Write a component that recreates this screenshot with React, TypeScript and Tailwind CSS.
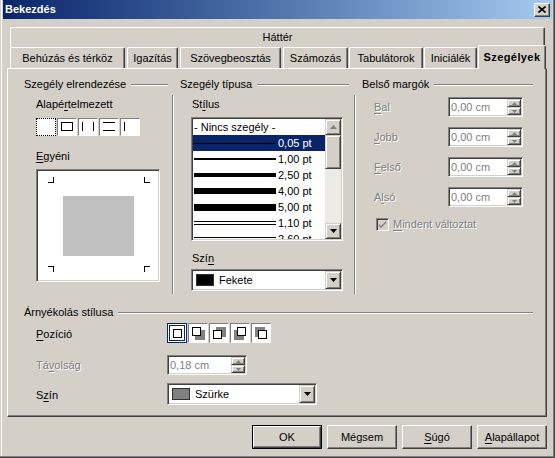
import React from 'react';

const raised =
  'border border-t-white border-l-white border-b-[#404040] border-r-[#404040] shadow-[inset_-1px_-1px_#808080]';
const sunken =
  'border border-t-[#808080] border-l-[#808080] border-b-white border-r-white shadow-[inset_1px_1px_#404040,inset_-1px_-1px_#d4d0c8]';
const scrollBtn =
  'bg-[#d4d0c8] border border-t-[#d4d0c8] border-l-[#d4d0c8] border-b-[#404040] border-r-[#404040] shadow-[inset_1px_1px_#ffffff,inset_-1px_-1px_#808080]';
const disabledText = 'text-[#808080] [text-shadow:1px_1px_0_#ffffff]';

function Arrow({ dir, color = '#000', w = 7, h = 4 }: { dir: 'up' | 'down'; color?: string; w?: number; h?: number }) {
  const pts = dir === 'down' ? `0,0 ${w},0 ${w / 2},${h}` : `0,${h} ${w},${h} ${w / 2},0`;
  return (
    <svg width={w} height={h} className="block">
      <polygon points={pts} fill={color} />
    </svg>
  );
}

function GroupHeader({ title, className = '' }: { title: string; className?: string }) {
  return (
    <div className={`flex h-[13px] ${className}`}>
      <span className="whitespace-nowrap">{title}</span>
      <div className="flex-1 ml-[5px] mt-[6px] h-[2px] border-t border-t-[#808080] border-b border-b-white" />
    </div>
  );
}

function VSep({ className = '' }: { className?: string }) {
  return <div className={`w-[2px] h-[199px] mt-[17px] border-l border-l-[#808080] border-r border-r-white ${className}`} />;
}

function Mn({ children }: { children: React.ReactNode }) {
  return <span className="underline underline-offset-[2px]">{children}</span>;
}

function Tab({ label, w, ml, selected }: { label: string; w: number; ml: number; selected?: boolean }) {
  const base =
    'flex items-center justify-center border-t border-l border-white border-r border-r-[#404040] shadow-[inset_-1px_0_#808080] rounded-tl-[2px] rounded-tr-[2px] whitespace-nowrap';
  return (
    <div
      className={`${base} ${selected ? 'h-[24px] -mb-[1px] relative z-10 bg-[#d4d0c8] font-bold tracking-[0.4px]' : 'h-[21px]'}`}
      style={{ width: w, marginLeft: ml }}
    >
      {label}
    </div>
  );
}

function PresetIcon({ kind }: { kind: number }) {
  if (kind === 0) {
    return <div className="w-[20px] h-[18px] bg-white border border-dotted border-black" />;
  }
  return (
    <div className="w-[20px] h-[18px] bg-white border border-t-[#808080] border-l-[#808080] border-b-white border-r-white">
      <svg width="18" height="16" className="block" shapeRendering="crispEdges">
        {kind === 1 && <rect x="3.5" y="3.5" width="11" height="8" fill="none" stroke="#000" />}
        {kind === 2 && (
          <>
            <line x1="3.5" y1="3" x2="3.5" y2="12" stroke="#000" />
            <line x1="14.5" y1="3" x2="14.5" y2="12" stroke="#000" />
          </>
        )}
        {kind === 3 && (
          <>
            <line x1="3" y1="3.5" x2="15" y2="3.5" stroke="#000" />
            <line x1="3" y1="11.5" x2="15" y2="11.5" stroke="#000" />
          </>
        )}
        {kind === 4 && <line x1="3.5" y1="3" x2="3.5" y2="12" stroke="#000" />}
      </svg>
    </div>
  );
}

function ShadowIcon({ kind }: { kind: number }) {
  const sq: Record<number, [number, number]> = { 0: [5, 5], 1: [3, 3], 2: [3, 6], 3: [6, 3], 4: [6, 6] };
  const sh: Record<number, [number, number]> = { 1: [6, 6], 2: [6, 3], 3: [3, 6], 4: [3, 3] };
  const [sx, sy] = sq[kind];
  const frame =
    kind === 0
      ? 'border border-[#0a246a] shadow-[inset_0_0_0_1px_#ffffff,inset_0_0_0_2px_#0a246a]'
      : 'border border-t-[#808080] border-l-[#808080] border-b-white border-r-white';
  return (
    <div className={`w-[20px] h-[20px] bg-white ${frame}`}>
      <svg width="18" height="18" className="block" shapeRendering="crispEdges">
        {kind !== 0 && <rect x={sh[kind][0]} y={sh[kind][1]} width="10" height="10" fill="#808080" />}
        <rect x={sx + 0.5} y={sy + 0.5} width="8" height="8" fill="#fff" stroke="#000" />
      </svg>
    </div>
  );
}

function Dropdown({ w, swatch, label }: { w: number; swatch: string; label: string }) {
  return (
    <div className={`${sunken} h-[22px] bg-white p-[1px] flex items-center`} style={{ width: w }}>
      <div className="ml-[3px] w-[18px] h-[12px] border border-[#303030]" style={{ background: swatch }} />
      <span className="ml-[5px] flex-1">{label}</span>
      <div className={`${scrollBtn} w-[16px] h-[18px] flex items-center justify-center`}>
        <Arrow dir="down" />
      </div>
    </div>
  );
}

function SpinField({ value, w }: { value: string; w: number }) {
  return (
    <div className={`${sunken} h-[20px] bg-white p-[1px] flex`} style={{ width: w }}>
      <span className="flex-1 pl-[1px] leading-[16px] text-[#808080]">{value}</span>
      <div className="w-[14px] flex flex-col">
        <div className={`${scrollBtn} h-[8px] flex items-center justify-center`}>
          <Arrow dir="up" w={5} h={3} color="#808080" />
        </div>
        <div className={`${scrollBtn} h-[8px] flex items-center justify-center`}>
          <Arrow dir="down" w={5} h={3} color="#808080" />
        </div>
      </div>
    </div>
  );
}

type LineStyle = { label: string; lines: [number, number][] };

const styles: LineStyle[] = [
  { label: '0,05 pt', lines: [[1, 0]] },
  { label: '1,00 pt', lines: [[2, 0]] },
  { label: '2,50 pt', lines: [[4, 0]] },
  { label: '4,00 pt', lines: [[6, 0]] },
  { label: '5,00 pt', lines: [[7, 0]] },
  { label: '1,10 pt', lines: [[1, 0], [1, 2]] },
  { label: '2,60 pt', lines: [[1, 0], [2, 2]] },
];

function StyleList() {
  return (
    <div className={`${sunken} w-[152px] h-[124px] bg-white p-[1px] flex`}>
      <div className="flex-1 flex flex-col overflow-hidden">
        <div className="h-[16px] shrink-0 flex items-center pl-[1px] whitespace-nowrap">- Nincs szegély -</div>
        {styles.map((s, i) => (
          <div
            key={s.label}
            className={`h-[16px] shrink-0 flex items-center ${i === 0 ? 'bg-[#0a246a] text-white' : ''}`}
          >
            <div className="ml-[1px] w-[82px] flex flex-col">
              {s.lines.map(([h, mt], j) => (
                <div key={j} className="bg-black w-full" style={{ height: h, marginTop: mt }} />
              ))}
            </div>
            <span className="ml-[2px] whitespace-nowrap">{s.label}</span>
          </div>
        ))}
      </div>
      <div className="w-[16px] flex flex-col bg-[#ecebe8]">
        <div className={`${scrollBtn} h-[16px] flex items-center justify-center`}>
          <Arrow dir="up" color="#808080" />
        </div>
        <div className={`${scrollBtn} h-[34px]`} />
        <div className="flex-1" />
        <div className={`${scrollBtn} h-[16px] flex items-center justify-center`}>
          <Arrow dir="down" />
        </div>
      </div>
    </div>
  );
}

function Preview() {
  return (
    <div className={`${sunken} w-[124px] h-[113px] bg-white p-[1px] mt-[6px]`}>
      <svg width="120" height="109" className="block" shapeRendering="crispEdges">
        <rect x="25" y="25" width="71" height="60" fill="#c0c0c0" />
        <g stroke="#000" fill="none">
          <path d="M10 11.5h5.5V6" />
          <path d="M106 6v5.5h5.5" />
          <path d="M10 95.5h5.5V101" />
          <path d="M106 101v-5.5h5.5" />
        </g>
      </svg>
    </div>
  );
}

function MarginRow({ label, first }: { label: React.ReactNode; first?: boolean }) {
  return (
    <div className={`flex items-center h-[20px] pl-[12px] ${first ? 'mt-[6px]' : 'mt-[10px]'}`}>
      <span className={`w-[74px] ${disabledText}`}>{label}</span>
      <SpinField value="0,00 cm" w={75} />
    </div>
  );
}

function Button({ children, isDefault }: { children: React.ReactNode; isDefault?: boolean }) {
  const inner = (
    <div className={`${raised} w-full h-full flex items-center justify-center bg-[#d4d0c8]`}>{children}</div>
  );
  return (
    <div className={`w-[70px] h-[24px] ${isDefault ? 'border border-black' : ''}`}>{inner}</div>
  );
}

export default function App() {
  return (
    <div className="w-[555px] h-[458px] bg-[#d4d0c8] flex flex-col text-[11px] leading-[13px] text-black [font-family:Liberation_Sans,Arial,sans-serif] shadow-[inset_-1px_-1px_#404040,inset_-2px_-2px_#808080,inset_1px_0_#d4d0c8,inset_2px_0_#ffffff] overflow-hidden">
      {/* title bar */}
      <div className="mx-[3px] h-[19px] shrink-0 bg-linear-to-r from-[#0a246a] to-[#a6caf0] flex items-center justify-between pl-[2px] pr-[2px]">
        <span className="text-white font-bold">Bekezdés</span>
        <div className={`${raised} bg-[#d4d0c8] w-[16px] h-[14px] flex items-center justify-center`}>
          <svg width="8" height="7" className="block">
            <path d="M0.5 0.5L7.5 6.5M7.5 0.5L0.5 6.5" stroke="#000" strokeWidth="1.6" />
          </svg>
        </div>
      </div>

      {/* tabs */}
      <div className="mt-[8px] pl-[7px] flex flex-col">
        <div className="ml-[3px] w-[535px] h-[20px] flex items-center justify-center border-t border-l border-white border-r border-r-[#404040] shadow-[inset_-1px_0_#808080] rounded-tl-[2px] rounded-tr-[2px]">
          Háttér
        </div>
        <div className="h-[21px] flex items-end">
          <Tab label="Behúzás és térköz" w={115} ml={3} />
          <Tab label="Igazítás" w={51} ml={2} />
          <Tab label="Szövegbeosztás" w={101} ml={2} />
          <Tab label="Számozás" w={65} ml={2} />
          <Tab label="Tabulátorok" w={74} ml={1} />
          <Tab label="Iniciálék" w={53} ml={1} />
          <Tab label="Szegélyek" w={68} ml={1} selected />
        </div>

        {/* panel */}
        <div className="w-[540px] h-[349px] border-t border-l border-white border-r border-b border-r-[#404040] border-b-[#404040] shadow-[inset_-1px_-1px_#808080] pt-[9px] pl-[16px] flex flex-col">
          <div className="flex h-[216px]">
            {/* col 1 */}
            <div className="w-[144px] flex flex-col">
              <GroupHeader title="Szegély elrendezése" />
              <div className="pl-[12px] flex flex-col">
                <span className="mt-[7px]">
                  Alapé<Mn>r</Mn>telmezett
                </span>
                <div className="mt-[7px] flex gap-[1px]">
                  {[0, 1, 2, 3, 4].map((k) => (
                    <PresetIcon key={k} kind={k} />
                  ))}
                </div>
                <span className="mt-[14px]">
                  <Mn>E</Mn>gyéni
                </span>
                <Preview />
              </div>
            </div>
            <VSep className="ml-[4px]" />
            {/* col 2 */}
            <div className="ml-[6px] w-[169px] flex flex-col">
              <GroupHeader title="Szegély típusa" />
              <div className="pl-[11px] flex flex-col">
                <span className="mt-[7px] pl-[1px]">
                  St<Mn>í</Mn>lus
                </span>
                <div className="mt-[6px]">
                  <StyleList />
                </div>
                <span className="mt-[11px] pl-[1px]">
                  Szí<Mn>n</Mn>
                </span>
                <div className="mt-[4px]">
                  <Dropdown w={152} swatch="#000000" label="Fekete" />
                </div>
              </div>
            </div>
            <VSep className="ml-[5px]" />
            {/* col 3 */}
            <div className="ml-[6px] w-[171px] flex flex-col">
              <GroupHeader title="Belső margók" />
              <MarginRow first label={<><Mn>B</Mn>al</>} />
              <MarginRow label={<><Mn>J</Mn>obb</>} />
              <MarginRow label={<><Mn>F</Mn>első</>} />
              <MarginRow label={<>A<Mn>l</Mn>só</>} />
              <div className="mt-[11px] pl-[14px] flex items-center h-[13px]">
                <div className={`${sunken} w-[13px] h-[13px] bg-[#d4d0c8]`}>
                  <svg width="11" height="11" className="block">
                    <path d="M2 5l2 2 5-5v2l-5 5-2-2z" fill="#808080" />
                  </svg>
                </div>
                <span className={`ml-[4px] ${disabledText}`}>
                  <Mn>M</Mn>indent változtat
                </span>
              </div>
            </div>
          </div>

          {/* shadow */}
          <GroupHeader title="Árnyékolás stílusa" className="mt-[12px] w-[509px]" />
          <div className="pl-[12px] flex flex-col">
            <div className="mt-[4px] h-[20px] flex items-center">
              <span className="w-[131px] pt-[3px]">
                <Mn>P</Mn>ozíció
              </span>
              <div className="flex gap-[1px]">
                {[0, 1, 2, 3, 4].map((k) => (
                  <ShadowIcon key={k} kind={k} />
                ))}
              </div>
            </div>
            <div className="mt-[12px] h-[20px] flex items-center">
              <span className={`w-[131px] pt-[1px] ${disabledText}`}>
                Tá<Mn>v</Mn>olság
              </span>
              <SpinField value="0,18 cm" w={80} />
            </div>
            <div className="mt-[8px] h-[22px] flex items-center">
              <span className="w-[131px] pt-[2px]">
                S<Mn>z</Mn>ín
              </span>
              <Dropdown w={150} swatch="#808080" label="Szürke" />
            </div>
          </div>
        </div>
      </div>

      {/* buttons */}
      <div className="mt-[8px] flex justify-end pr-[8px] gap-[5px]">
        <Button isDefault>OK</Button>
        <Button>Mégsem</Button>
        <Button>
          <Mn>S</Mn>úgó
        </Button>
        <Button>
          <Mn>A</Mn>lapállapot
        </Button>
      </div>
    </div>
  );
}
